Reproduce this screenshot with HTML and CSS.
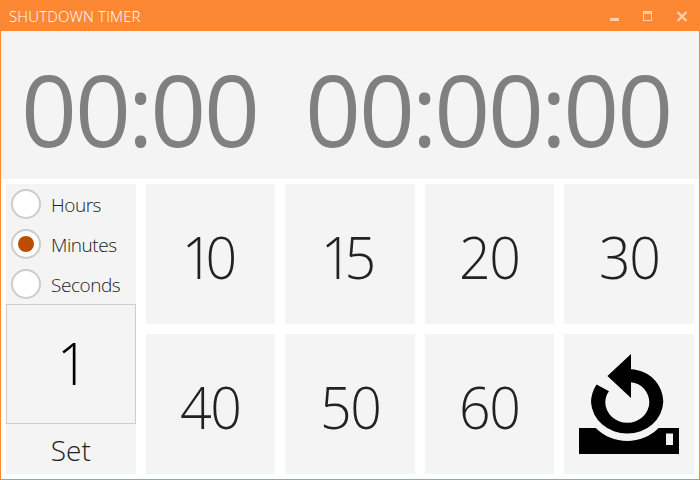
FILE: index.html
```html
<!DOCTYPE html>
<html lang="en">
<head>
<meta charset="utf-8">
<title>Shutdown Timer</title>
<link rel="stylesheet" href="styles.css">
</head>
<body>
<div class="window">
  <header class="titlebar">
    <h1 class="title">SHUTDOWN TIMER</h1>
    <svg class="controls" width="78" height="11" viewBox="0 0 78 11" fill="none" stroke="#fecfaa" shape-rendering="crispEdges">
      <path d="M0 8.5H9" stroke-width="3"/>
      <path d="M33.5 1V9.5H41.5V1"/>
      <path d="M33 1.5H42" stroke-width="3"/>
      <path d="M67.5 1L76.5 10M76.5 1L67.5 10" stroke-width="2.3" shape-rendering="auto"/>
    </svg>
  </header>
  <section class="display">
    <div class="clock">00<span class="colon">:</span>00</div>
    <div class="clock">00<span class="colon">:</span>00<span class="colon">:</span>00</div>
  </section>
  <main class="panel">
    <div class="settings">
      <label class="option"><span class="radio"></span><span class="name">Hours</span></label>
      <label class="option"><span class="radio selected"></span><span class="name">Minutes</span></label>
      <label class="option"><span class="radio"></span><span class="name">Seconds</span></label>
      <div class="value"><span class="digits">1</span></div>
      <div class="set">Set</div>
    </div>
    <div class="tile"><span class="digits teens">10</span></div>
    <div class="tile"><span class="digits teens">15</span></div>
    <div class="tile"><span class="digits">20</span></div>
    <div class="tile"><span class="digits">30</span></div>
    <div class="tile"><span class="digits">40</span></div>
    <div class="tile"><span class="digits">50</span></div>
    <div class="tile"><span class="digits">60</span></div>
    <div class="tile">
      <svg class="reset" width="100" height="100" viewBox="0 0 100 100">
        <path d="M0 74H16.8A42 38.7 0 0 0 79.6 74H100V100H0Z M87 79.5V91H94V79.5Z" fill-rule="evenodd"/>
        <path d="M52 0V15.2C70 16 84.3 30 84.3 48A36.2 33.2 0 0 1 12 48.3Q12 39 17.5 30.4L30 37.2Q26.3 42 26.3 48.3A22 20.4 0 0 0 70.3 48.3C70.3 38 62.5 29 52 28.2V44L28.4 22Z"/>
      </svg>
    </div>
  </main>
</div>
</body>
</html>
```
FILE: styles.css
```css
* { box-sizing: border-box; }
body {
  margin: 0;
  font-family: "Open Sans", "Noto Sans", sans-serif;
  font-weight: 300;
  color: #222;
}
.window {
  width: 700px;
  height: 480px;
  border: 1px solid #fd8834;
  background: #fff;
  overflow: hidden;
}
.titlebar {
  display: flex;
  justify-content: space-between;
  align-items: center;
  height: 30px;
  padding: 0 11px 0 8px;
  background: #fd8834;
}
.title {
  margin: 0;
  font-size: 15px;
  font-weight: 300;
  line-height: 32px;
  letter-spacing: 0.15px;
  color: #fff;
}
.display {
  display: flex;
  gap: 47px;
  height: 148px;
  padding-left: 20px;
  background: #f4f4f4;
}
.clock {
  font-size: 98px;
  font-weight: 400;
  line-height: 156px;
  letter-spacing: -2.1px;
  white-space: nowrap;
  color: #808080;
}
.colon { margin: 0 -1.2px; }
.panel {
  display: grid;
  grid-template-columns: repeat(5, 1fr);
  grid-template-rows: 140px 140px;
  gap: 10px;
  padding: 5px;
}
.settings {
  grid-row: span 2;
  background: #f4f4f4;
}
.option {
  display: flex;
  align-items: center;
  gap: 10px;
  height: 40px;
  padding-left: 5px;
}
.radio {
  display: flex;
  align-items: center;
  justify-content: center;
  width: 30px;
  height: 30px;
  border: 2px solid #ccc;
  border-radius: 50%;
  background: #fff;
}
.radio.selected::after {
  content: "";
  width: 16px;
  height: 16px;
  border-radius: 50%;
  background: #ba4d00;
}
.name {
  font-size: 19px;
  letter-spacing: -0.45px;
  line-height: 38px;
  padding-top: 2px;
}
.value {
  height: 120px;
  border: 1px solid #ccc;
  font-size: 59px;
  line-height: 115px;
  text-align: center;
  color: #000;
}
.set {
  height: 50px;
  font-size: 28px;
  line-height: 52px;
  text-align: center;
}
.tile {
  display: flex;
  align-items: center;
  justify-content: center;
  background: #f4f4f4;
  font-size: 59px;
  line-height: 140px;
}
.digits {
  display: inline-block;
  padding-top: 4px;
  letter-spacing: -1.4px;
  transform: scaleX(0.94);
}
.value .digits {
  padding: 0 0 0 2px;
}
.digits.teens {
  letter-spacing: -8.5px;
  padding-right: 11px;
}
.reset { fill: #000; }
```
